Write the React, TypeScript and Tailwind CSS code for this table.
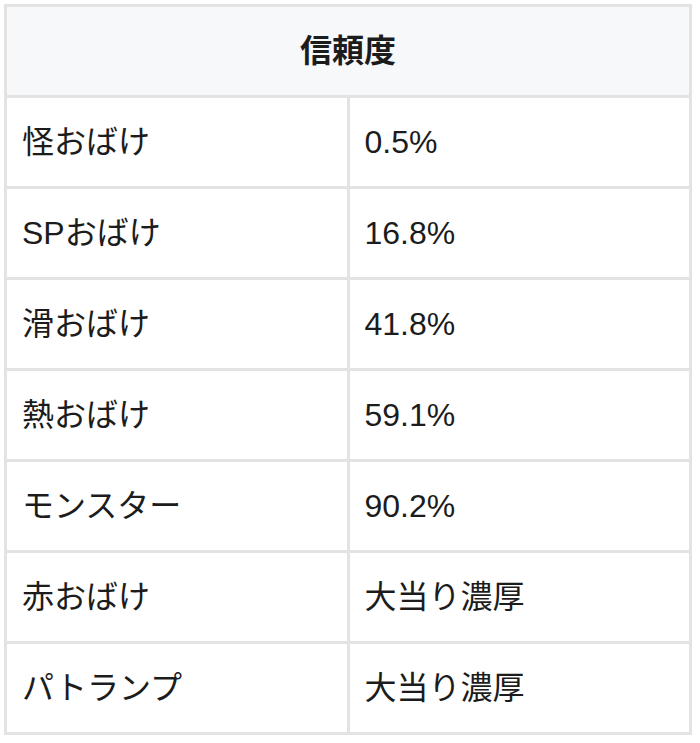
import React from 'react';

const rows: [string, string][] = [
  ['怪おばけ', '0.5%'],
  ['SPおばけ', '16.8%'],
  ['滑おばけ', '41.8%'],
  ['熱おばけ', '59.1%'],
  ['モンスター', '90.2%'],
  ['赤おばけ', '大当り濃厚'],
  ['パトランプ', '大当り濃厚'],
];

export default function App() {
  return (
    <div
      className="w-[700px] h-[743px] bg-white p-1"
      style={{ fontFamily: '"Liberation Sans", "Noto Sans CJK JP", sans-serif' }}
    >
      <table className="w-[688px] border-collapse table-fixed text-[32px] text-[#1c1c1c]">
        <thead>
          <tr>
            <th
              colSpan={2}
              className="h-[91px] border-[3px] border-[#e3e3e3] bg-[#f7f8fa] text-center font-bold"
            >
              信頼度
            </th>
          </tr>
        </thead>
        <tbody>
          {rows.map(([name, value]) => (
            <tr key={name}>
              <td className="h-[91px] w-1/2 border-[3px] border-[#e3e3e3] pl-[15px] font-normal">{name}</td>
              <td className="h-[91px] w-1/2 border-[3px] border-[#e3e3e3] pl-[15px] font-normal">{value}</td>
            </tr>
          ))}
        </tbody>
      </table>
    </div>
  );
}
